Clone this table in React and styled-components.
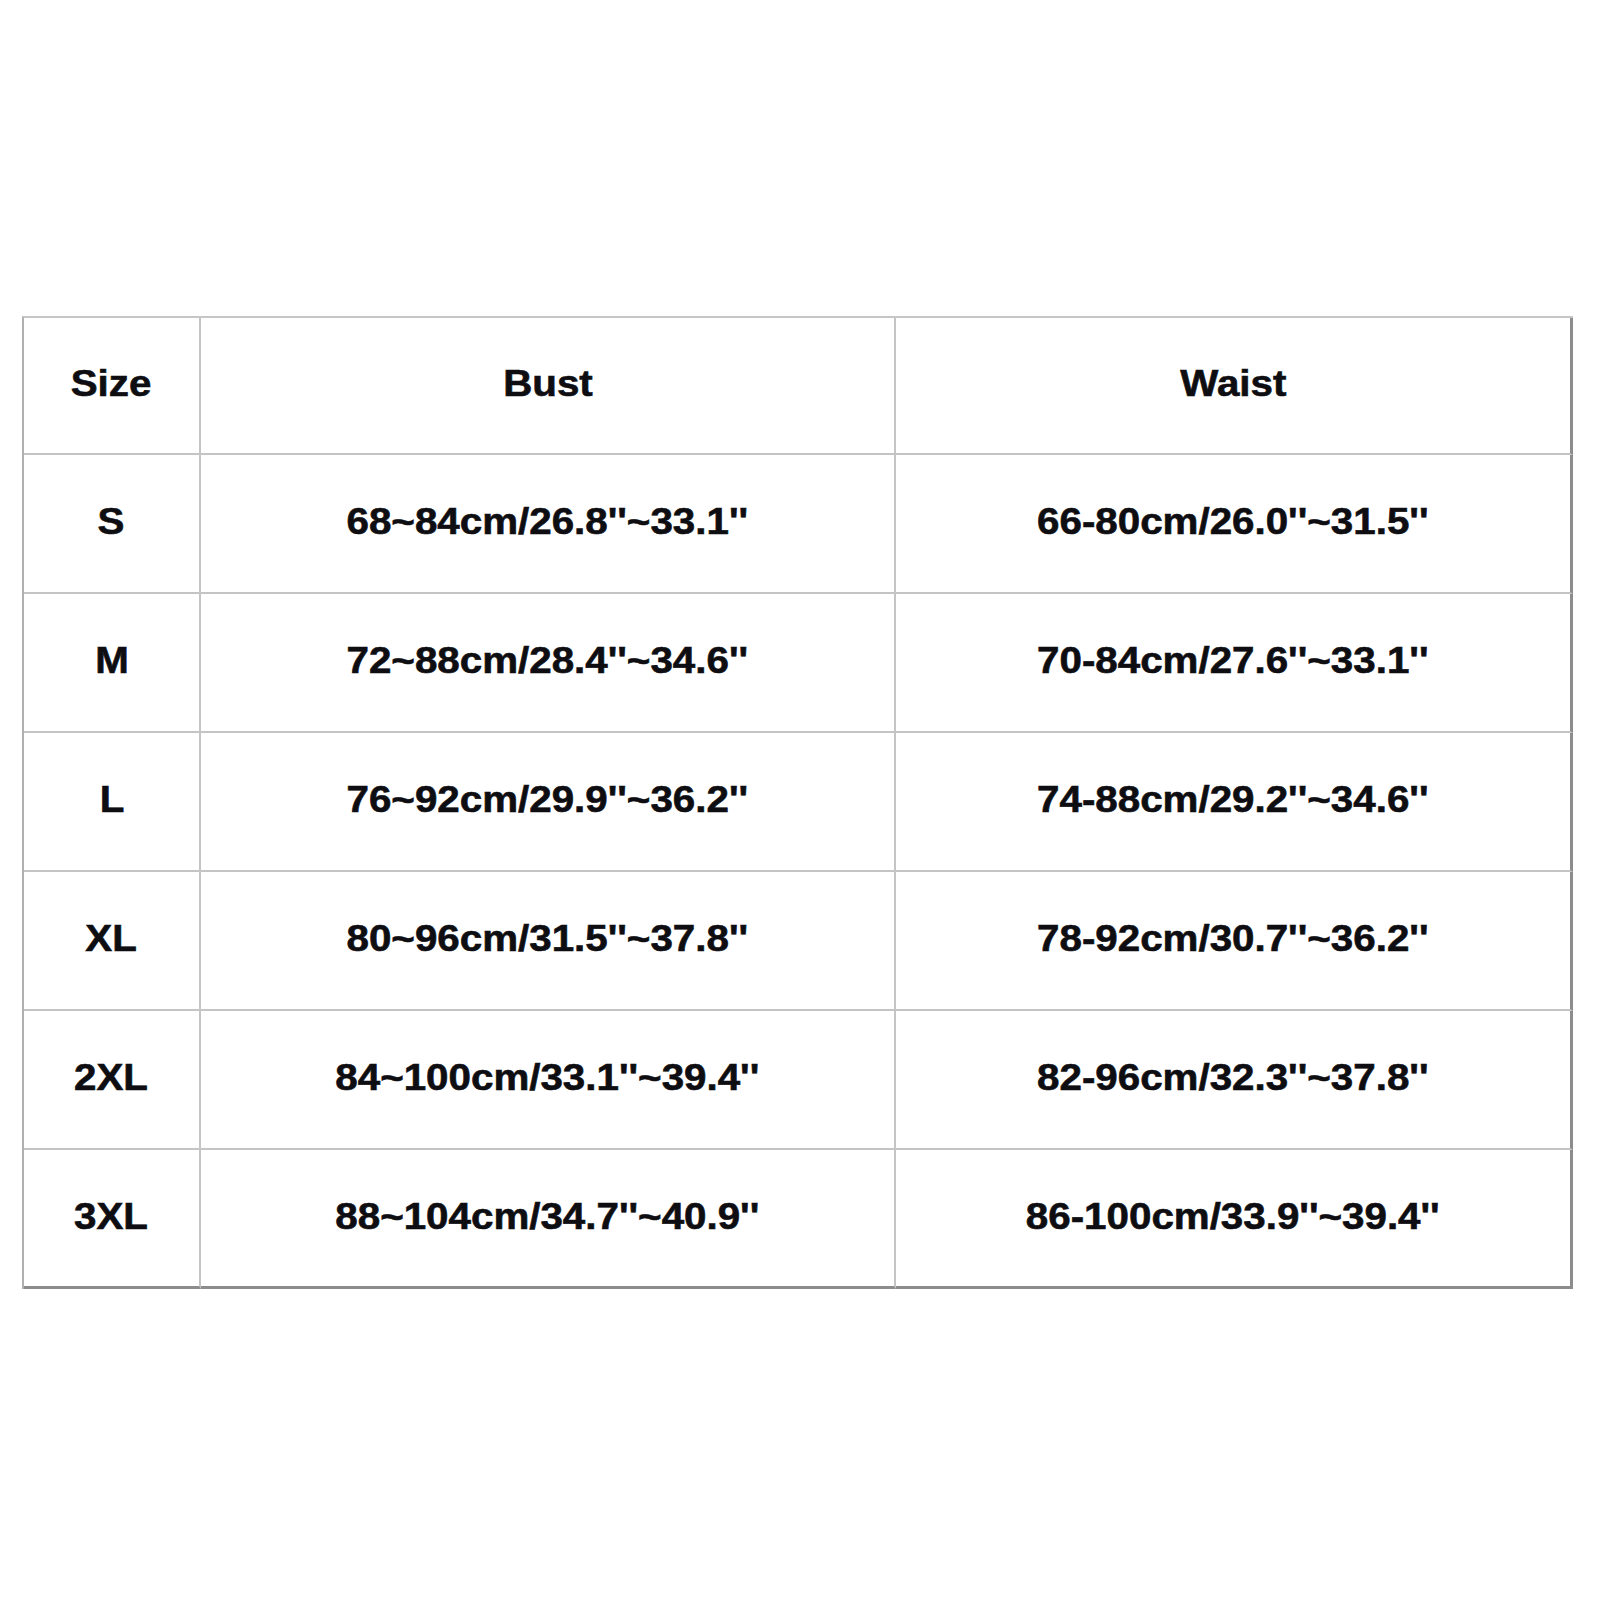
import React from 'react'
import styled, { createGlobalStyle } from 'styled-components'

const GlobalStyle = createGlobalStyle`
  html, body {
    margin: 0;
    padding: 0;
    background: #fff;
  }
  body {
    font-family: 'Liberation Sans', Arial, sans-serif;
  }
`

const Page = styled.div`
  width: 1600px;
  height: 1600px;
  padding: 316px 0 0 22px;
  box-sizing: border-box;
  background: #fff;
`

const Grid = styled.div`
  display: grid;
  grid-template-columns: 177px 695px 677px;
  grid-template-rows: 137px repeat(6, 139px);
  width: max-content;
  border-top: 2px solid #c6c6c6;
  border-left: 2px solid #b0b0b0;
`

const Cell = styled.div`
  display: flex;
  align-items: center;
  justify-content: center;
  box-sizing: border-box;
  padding-bottom: 3px;
  border-right: 2px solid ${p => (p.lastCol ? '#8c8c8c' : '#c4c4c4')};
  border-bottom: 2px solid ${p => (p.lastRow ? '#8c8c8c' : '#c4c4c4')};
  ${p => p.lastCol && 'border-right-width: 3px;'}
  ${p => p.lastRow && 'border-bottom-width: 3px;'}
`

const Text = styled.span`
  display: inline-block;
  font-family: 'Liberation Sans', Arial, sans-serif;
  font-weight: 700;
  font-size: 36px;
  line-height: 1;
  color: #0e0e12;
  white-space: nowrap;
  -webkit-text-stroke: 0.6px #0e0e12;
  transform: scaleX(${p => p.stretch || 1});
`

const headers = ['Size', 'Bust', 'Waist']

const rows = [
  ['S', '68~84cm/26.8\'\'~33.1\'\'', '66-80cm/26.0\'\'~31.5\'\''],
  ['M', '72~88cm/28.4\'\'~34.6\'\'', '70-84cm/27.6\'\'~33.1\'\''],
  ['L', '76~92cm/29.9\'\'~36.2\'\'', '74-88cm/29.2\'\'~34.6\'\''],
  ['XL', '80~96cm/31.5\'\'~37.8\'\'', '78-92cm/30.7\'\'~36.2\'\''],
  ['2XL', '84~100cm/33.1\'\'~39.4\'\'', '82-96cm/32.3\'\'~37.8\'\''],
  ['3XL', '88~104cm/34.7\'\'~40.9\'\'', '86-100cm/33.9\'\'~39.4\'\''],
]

const App = () => (
  <>
    <GlobalStyle />
    <Page>
      <Grid>
        {headers.map((h, i) => (
          <Cell key={h} lastCol={i === 2}>
            <Text stretch={1.12}>{h}</Text>
          </Cell>
        ))}
        {rows.map((row, r) =>
          row.map((value, c) => (
            <Cell
              key={`${r}-${c}`}
              lastCol={c === 2}
              lastRow={r === rows.length - 1}
            >
              <Text stretch={1.12}>{value}</Text>
            </Cell>
          ))
        )}
      </Grid>
    </Page>
  </>
)

export default App
